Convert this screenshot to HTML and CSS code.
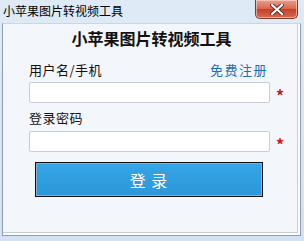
FILE: index.html
```html
<!DOCTYPE html>
<html lang="zh-CN">
<head>
    <meta charset="UTF-8">
    <meta name="viewport" content="width=device-width, initial-scale=1.0">
    <title>小苹果图片转视频工具</title>
    <link rel="stylesheet" href="styles.css">
</head>
<body>
    <div class="window">
        <div class="titlebar">
            <span class="title">小苹果图片转视频工具</span>
            <button class="close" type="button" aria-label="关闭">
                <svg width="14" height="11" viewBox="0 0 14 11">
                    <path d="M2 1 L12 10 M12 1 L2 10" stroke="#5a2a20" stroke-width="4" stroke-linecap="round"/>
                    <path d="M2 1 L12 10 M12 1 L2 10" stroke="#fff" stroke-width="2.2" stroke-linecap="round"/>
                </svg>
            </button>
        </div>
        <div class="panel">
            <h1>小苹果图片转视频工具</h1>
            <form class="login">
                <div class="label-row">
                    <label for="username">用户名/手机</label>
                    <a href="#" class="register">免费注册</a>
                </div>
                <div class="field">
                    <input type="text" id="username">
                    <span class="star">*</span>
                </div>
                <div class="label-row second">
                    <label for="password">登录密码</label>
                </div>
                <div class="field">
                    <input type="password" id="password">
                    <span class="star">*</span>
                </div>
                <button type="submit" class="submit">登 录</button>
            </form>
        </div>
    </div>
</body>
</html>
```

FILE: styles.css
```css
body {
    margin: 0;
    font-family: "Noto Sans CJK SC", "DejaVu Sans", sans-serif;
    background-color: #d6e4f3;
}

.window {
    width: 304px;
    height: 241px;
    background: linear-gradient(#dfeaf7, #d3e2f3);
    display: flex;
    flex-direction: column;
}

.titlebar {
    height: 23px;
    display: flex;
    justify-content: space-between;
    align-items: flex-start;
}

.title {
    font-size: 12px;
    line-height: 14px;
    margin: 4px 0 0 3px;
    color: #000;
}

.close {
    width: 43px;
    height: 19px;
    margin-right: 6px;
    padding: 0;
    border: 1px solid #7a3a30;
    border-top: none;
    border-radius: 0 0 5px 5px;
    background: linear-gradient(#eba08e, #d8644c 50%, #c3412a 51%, #d86a4e);
    box-shadow: inset 0 0 0 1px rgba(255, 220, 210, 0.6);
    display: flex;
    justify-content: center;
    align-items: center;
}

.panel {
    flex: 1;
    margin: 0 3px 5px 2px;
    background-color: #f3f6fb;
    border: 1px solid #8d9cb0;
    border-top-color: #c9d6e6;
    box-shadow: inset -2px -2px 0 #ffffff, inset -3px -3px 0 #c3cedb;
}

h1 {
    margin: 4px 0 0;
    font-size: 16px;
    line-height: 20px;
    font-weight: bold;
    text-align: center;
    color: #111;
}

.login {
    margin: 14px 0 0 26px;
    width: 256px;
}

.label-row {
    display: flex;
    justify-content: space-between;
    width: 241px;
    height: 16px;
    font-size: 13px;
    line-height: 16px;
}

.label-row.second {
    margin-top: 7px;
}

label {
    color: #111;
    letter-spacing: 0.5px;
}

.register {
    color: #1f70b0;
    text-decoration: none;
    letter-spacing: 1.5px;
    margin-right: 2px;
}

.field {
    display: flex;
    align-items: center;
    height: 21px;
    margin-top: 4px;
}

.second + .field {
    margin-top: 5px;
}

input {
    box-sizing: border-box;
    width: 241px;
    height: 21px;
    border: 1px solid #c9ced6;
    border-radius: 2px;
    background-color: #fff;
    padding: 0 4px;
}

.star {
    color: #d3161b;
    font-size: 16px;
    line-height: 1;
    font-weight: bold;
    margin-left: 6px;
    padding-top: 5px;
}

.submit {
    display: block;
    box-sizing: border-box;
    width: 228px;
    height: 35px;
    margin: 10px 0 0 6px;
    border: 1px solid #111;
    box-shadow: inset 0 0 0 1px #7fb2d6;
    background: linear-gradient(#35a6e6, #2b97d8);
    color: #fff;
    font-family: "Noto Sans CJK SC", sans-serif;
    font-size: 16px;
    letter-spacing: 1px;
    padding: 0;
    cursor: pointer;
}
```
